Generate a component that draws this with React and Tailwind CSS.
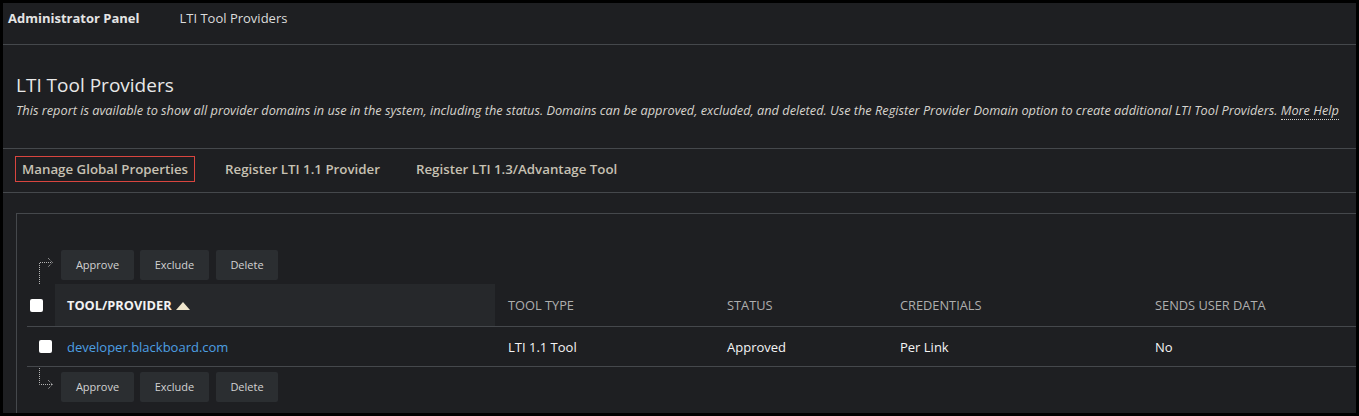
import React from "react";

const LINE = "border-[#45484c]";

const Arrow = ({ down }) => (
  <svg width="26" height="30" className="shrink-0 overflow-visible" viewBox="0 0 26 30">
    <g fill="none" stroke="#b5b5b5" strokeWidth="1">
      <path d={down ? "M4.5 -4 V12.5 H17" : "M4.5 34 V12.5 H17"} strokeDasharray="1 1" />
      <path d="M13 8 L17.5 12.5 L13 17" strokeDasharray="1 1" />
    </g>
  </svg>
);

const Toolbar = ({ down }) => (
  <div className="flex h-[30px] ml-[18px]">
    <Arrow down={down} />
    <button className="w-[73px] h-[30px] bg-[#2b2e31] rounded-[2px] text-[11px] text-[#d2d2d2]">Approve</button>
    <button className="w-[69px] h-[30px] ml-[6px] bg-[#2b2e31] rounded-[2px] text-[11px] text-[#d2d2d2]">Exclude</button>
    <button className="w-[62px] h-[30px] ml-[7px] bg-[#2b2e31] rounded-[2px] text-[11px] text-[#d2d2d2]">Delete</button>
  </div>
);

const Check = ({ className }) => (
  <span className={`block w-[13px] h-[13px] bg-white rounded-[2px] ${className}`} />
);

export default function App() {
  return (
    <div className="w-[1359px] h-[416px] bg-black p-[3px]" style={{ fontFamily: '"Open Sans", sans-serif' }}>
      <div className="w-full h-full bg-[#1e1f22] overflow-hidden flex flex-col">
        {/* top bar */}
        <div className={`h-[42px] shrink-0 border-b ${LINE} pt-[6px] flex items-start`}>
          <span className="pl-[5px] text-[13px] leading-[18px] font-bold text-[#e4e4e4]">Administrator Panel</span>
          <span className="ml-[40px] text-[13px] leading-[18px] text-[#dcdcdc]">LTI Tool Providers</span>
        </div>

        {/* title */}
        <div className={`shrink-0 border-b ${LINE} px-[13px] pt-[26px] pb-[29px]`}>
          <h1 className="text-[19px] leading-[28px] text-[#e8e8e8]">LTI Tool Providers</h1>
          <p className="mt-[2px] text-[12.75px] leading-[18px] italic text-[#d6d3cd] whitespace-nowrap">
            This report is available to show all provider domains in use in the system, including the status. Domains can be approved, excluded, and deleted. Use the Register Provider Domain option to create additional LTI Tool Providers.{" "}
            <span className="border-b border-dotted border-[#d6d3cd]">More Help</span>
          </p>
        </div>

        {/* tabs */}
        <div className={`shrink-0 border-b ${LINE} pl-[12px] pt-[7px] pb-[10px] flex items-center text-[13.3px] font-semibold text-[#c7c1b3]`}>
          <span className="border border-[#d9453f] px-[6px] leading-[23px] pt-[1px]">Manage Global Properties</span>
          <span className="ml-[23px] px-[7px] leading-[23px] pt-[1px]">Register LTI 1.1 Provider</span>
          <span className="ml-[22px] px-[7px] leading-[23px] pt-[1px]">Register LTI 1.3/Advantage Tool</span>
        </div>

        {/* panel */}
        <div className={`flex-1 mt-[20px] ml-[13px] -mr-[20px] border-l border-t ${LINE} pt-[36px]`}>
          <Toolbar />

          <div className="ml-[10px] mt-[4px]">
            {/* header row */}
            <div className={`flex h-[43px] border-b ${LINE} items-center text-[12.8px]`}>
              <div className="w-[28px] h-full flex items-center">
                <Check className="ml-[3px]" />
              </div>
              <div className="w-[440px] h-full bg-[#26282b] flex items-center pl-[12px] pt-[2px] font-bold text-[#f2f2f2]">
                TOOL/PROVIDER
                <svg width="14" height="8" viewBox="0 0 14 8" className="ml-[4px] mb-[1px]">
                  <path d="M0 8 L7 0 L14 8 Z" fill="#efe6cc" />
                </svg>
              </div>
              <div className="w-[219px] pl-[13px] pt-[2px] text-[#aeaeae]">TOOL TYPE</div>
              <div className="w-[173px] pl-[13px] pt-[2px] text-[#aeaeae]">STATUS</div>
              <div className="w-[255px] pl-[13px] pt-[2px] text-[#aeaeae]">CREDENTIALS</div>
              <div className="flex-1 pl-[13px] pt-[2px] text-[#aeaeae]">SENDS USER DATA</div>
            </div>

            {/* data row */}
            <div className={`flex h-[40px] border-b ${LINE} items-center text-[13px]`}>
              <div className="w-[28px] h-full flex items-center">
                <Check className="ml-[12px]" />
              </div>
              <div className="w-[440px] pl-[12px] pt-[2px] text-[#4d9fe2]">developer.blackboard.com</div>
              <div className="w-[219px] pl-[13px] pt-[2px] font-medium text-[#f4f4f4]">LTI 1.1 Tool</div>
              <div className="w-[173px] pl-[13px] pt-[2px] font-medium text-[#f4f4f4]">Approved</div>
              <div className="w-[255px] pl-[13px] pt-[2px] font-medium text-[#f4f4f4]">Per Link</div>
              <div className="flex-1 pl-[13px] pt-[2px] font-medium text-[#f4f4f4]">No</div>
            </div>
          </div>

          <div className="mt-[5px]">
            <Toolbar down />
          </div>
        </div>
      </div>
    </div>
  );
}
